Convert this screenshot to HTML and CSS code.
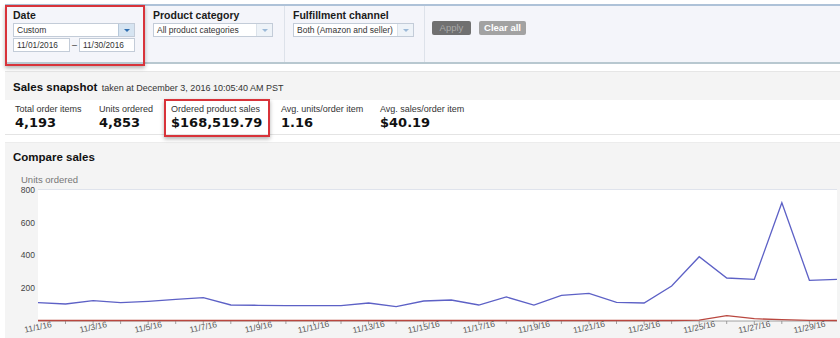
FILE: index.html
```html
<!DOCTYPE html>
<html lang="en">
<head>
	<meta charset="utf-8">
	<title>Sales dashboard</title>
	<link rel="stylesheet" href="styles.css">
</head>
<body>
	<div class="filters">
		<div class="filter">
			<div class="filter-label">Date</div>
			<div class="select select-date active">
				<span class="select-text">Custom</span>
				<span class="select-arrow"></span>
			</div>
			<div class="date-range">
				<span class="date-input">11/01/2016</span>
				<span class="date-dash">&ndash;</span>
				<span class="date-input">11/30/2016</span>
			</div>
		</div>
		<div class="filter">
			<div class="filter-label">Product category</div>
			<div class="select select-category">
				<span class="select-text">All product categories</span>
				<span class="select-arrow"></span>
			</div>
		</div>
		<div class="filter">
			<div class="filter-label">Fulfillment channel</div>
			<div class="select select-channel">
				<span class="select-text">Both (Amazon and seller)</span>
				<span class="select-arrow"></span>
			</div>
		</div>
		<div class="filter-actions">
			<button class="btn btn-apply">Apply</button>
			<button class="btn btn-clear">Clear all</button>
		</div>
		<div class="highlight highlight-date"></div>
	</div>

	<div class="snapshot">
		<div class="snapshot-head">
			<span class="section-title">Sales snapshot</span>
			<span class="snapshot-time">taken at December 3, 2016 10:05:40 AM PST</span>
		</div>
		<div class="metrics">
			<div class="metric m-items">
				<div class="metric-label">Total order items</div>
				<div class="metric-value">4,193</div>
			</div>
			<div class="metric m-units">
				<div class="metric-label">Units ordered</div>
				<div class="metric-value">4,853</div>
			</div>
			<div class="metric m-sales">
				<div class="metric-label">Ordered product sales</div>
				<div class="metric-value">$168,519.79</div>
			</div>
			<div class="metric m-avg-units">
				<div class="metric-label">Avg. units/order item</div>
				<div class="metric-value">1.16</div>
			</div>
			<div class="metric">
				<div class="metric-label">Avg. sales/order item</div>
				<div class="metric-value">$40.19</div>
			</div>
			<div class="highlight highlight-sales"></div>
		</div>
	</div>

	<div class="compare">
		<div class="compare-head section-title">Compare sales</div>
		<svg class="chart" width="835" height="168" viewBox="0 0 835 168">
			<text class="axis-title" x="16" y="13">Units ordered</text>
			<rect class="plot" x="33" y="19" width="799" height="132"></rect>
			<line class="plot-top" x1="33" y1="19.5" x2="832" y2="19.5"></line>

			<text class="y-label" x="30" y="23">800</text>
			<text class="y-label" x="30" y="56">600</text>
			<text class="y-label" x="30" y="88">400</text>
			<text class="y-label" x="30" y="121">200</text>

			<g class="ticks">
				<line x1="33" y1="151" x2="832" y2="151"></line>
				<line x1="60.5" y1="151" x2="60.5" y2="154"></line>
				<line x1="88.1" y1="151" x2="88.1" y2="154"></line>
				<line x1="115.6" y1="151" x2="115.6" y2="154"></line>
				<line x1="143.2" y1="151" x2="143.2" y2="154"></line>
				<line x1="170.7" y1="151" x2="170.7" y2="154"></line>
				<line x1="198.3" y1="151" x2="198.3" y2="154"></line>
				<line x1="225.8" y1="151" x2="225.8" y2="154"></line>
				<line x1="253.4" y1="151" x2="253.4" y2="154"></line>
				<line x1="280.9" y1="151" x2="280.9" y2="154"></line>
				<line x1="308.5" y1="151" x2="308.5" y2="154"></line>
				<line x1="336" y1="151" x2="336" y2="154"></line>
				<line x1="363.6" y1="151" x2="363.6" y2="154"></line>
				<line x1="391.1" y1="151" x2="391.1" y2="154"></line>
				<line x1="418.7" y1="151" x2="418.7" y2="154"></line>
				<line x1="446.2" y1="151" x2="446.2" y2="154"></line>
				<line x1="473.8" y1="151" x2="473.8" y2="154"></line>
				<line x1="501.3" y1="151" x2="501.3" y2="154"></line>
				<line x1="528.9" y1="151" x2="528.9" y2="154"></line>
				<line x1="556.4" y1="151" x2="556.4" y2="154"></line>
				<line x1="584" y1="151" x2="584" y2="154"></line>
				<line x1="611.5" y1="151" x2="611.5" y2="154"></line>
				<line x1="639.1" y1="151" x2="639.1" y2="154"></line>
				<line x1="666.6" y1="151" x2="666.6" y2="154"></line>
				<line x1="694.2" y1="151" x2="694.2" y2="154"></line>
				<line x1="721.7" y1="151" x2="721.7" y2="154"></line>
				<line x1="749.3" y1="151" x2="749.3" y2="154"></line>
				<line x1="776.8" y1="151" x2="776.8" y2="154"></line>
				<line x1="804.4" y1="151" x2="804.4" y2="154"></line>
			</g>

			<polyline class="line-units" points="33,132.7 60.55,134 88.1,130.7 115.65,132.7 143.2,131.3 170.75,129.3 198.3,127.7 225.85,135 253.4,135.3 280.95,135.7 308.5,135.7 336.05,135.7 363.6,133 391.15,136.7 418.7,131 446.25,130 473.8,135 501.35,127 528.9,135 556.45,125.3 584,123.3 611.55,132.3 639.1,133 666.65,116 694.2,86.7 721.75,108 749.3,109.3 776.85,32.7 804.4,110.3 831.95,109.3"></polyline>
			<polyline class="line-prev" points="33,150.5 666.65,150.5 694.2,150.2 721.75,145.7 749.3,148.7 776.85,149.7 804.4,150.3 831.95,150.5"></polyline>

			<g class="x-labels">
				<text x="33" y="160" transform="rotate(-12 33 157)">11/1/16</text>
				<text x="88.1" y="160" transform="rotate(-12 88.1 157)">11/3/16</text>
				<text x="143.2" y="160" transform="rotate(-12 143.2 157)">11/5/16</text>
				<text x="198.3" y="160" transform="rotate(-12 198.3 157)">11/7/16</text>
				<text x="253.4" y="160" transform="rotate(-12 253.4 157)">11/9/16</text>
				<text x="308.5" y="160" transform="rotate(-12 308.5 157)">11/11/16</text>
				<text x="363.6" y="160" transform="rotate(-12 363.6 157)">11/13/16</text>
				<text x="418.7" y="160" transform="rotate(-12 418.7 157)">11/15/16</text>
				<text x="473.8" y="160" transform="rotate(-12 473.8 157)">11/17/16</text>
				<text x="528.9" y="160" transform="rotate(-12 528.9 157)">11/19/16</text>
				<text x="584" y="160" transform="rotate(-12 584 157)">11/21/16</text>
				<text x="639.1" y="160" transform="rotate(-12 639.1 157)">11/23/16</text>
				<text x="694.2" y="160" transform="rotate(-12 694.2 157)">11/25/16</text>
				<text x="749.3" y="160" transform="rotate(-12 749.3 157)">11/27/16</text>
				<text x="804.4" y="160" transform="rotate(-12 804.4 157)">11/29/16</text>
			</g>
		</svg>
	</div>
</body>
</html>
```

FILE: styles.css
```css
:root {
	--filter-bg: #f4f5fa;
	--section-bg: #f4f4f4;
	--divider: #dde2ea;
	--input-border: #c3ccd8;
	--text: #222222;
	--muted: #777777;
	--red-mark: #d8333a;
}
html, body {
	margin: 0;
	padding: 0;
	overflow: hidden;
	background: #fff;
}
body {
	width: 840px;
	height: 338px;
	font-family: "Liberation Sans", Arial, sans-serif;
	color: var(--text);
}

/* filter bar */
.filters {
	position: relative;
	display: flex;
	height: 56px;
	margin: 4px 0 0 5px;
	border-top: 2px solid #aec2d8;
	border-bottom: 2px solid #b8c8d0;
	background-color: var(--filter-bg);
}
.filter {
	width: 131px;
	padding: 2px 0 0 8px;
	border-right: 1px solid var(--divider);
}
.filter-label {
	height: 15px;
	line-height: 15px;
	font-size: 10.5px;
	font-weight: bold;
	color: #1b1b1b;
}
.select {
	display: flex;
	box-sizing: border-box;
	height: 14px;
	border: 1px solid var(--input-border);
	background: #fff;
}
.select-date { width: 122px; }
.select-category { width: 120px; }
.select-channel { width: 121px; }
.select-text {
	flex: 1;
	padding-left: 3px;
	font-size: 8.5px;
	line-height: 12px;
	color: #333;
	white-space: nowrap;
}
.select-arrow {
	position: relative;
	width: 15px;
	border-left: 1px solid #dbe2ea;
	background: #eef3f8;
}
.select-arrow::after {
	content: "";
	position: absolute;
	left: 5px;
	top: 5px;
	border-left: 3px solid transparent;
	border-right: 3px solid transparent;
	border-top: 3px solid #9cbad8;
}
.select.active .select-arrow {
	background: #d6e4f1;
	border-left-color: #b7c8da;
}
.select.active .select-arrow::after {
	border-top-color: #2f6fb1;
}
.date-range {
	display: flex;
	align-items: center;
	margin-top: 1px;
}
.date-input {
	box-sizing: border-box;
	width: 57px;
	height: 14px;
	padding-left: 3px;
	border: 1px solid var(--input-border);
	background: #fff;
	font-size: 8.3px;
	line-height: 12px;
	color: #333;
}
.date-input + .date-dash + .date-input {
	width: 56px;
}
.date-dash {
	width: 9px;
	text-align: center;
	font-size: 9px;
	color: #333;
}
.filter-actions {
	display: flex;
	gap: 8px;
	align-items: flex-start;
	padding: 15px 0 0 7px;
}
.btn {
	height: 14px;
	padding: 0;
	border: 0;
	border-radius: 2px;
	font-family: "Liberation Sans", Arial, sans-serif;
	font-size: 9.5px;
	line-height: 14px;
}
.btn-apply {
	width: 39px;
	background: #707070;
	color: #a9a9a9;
}
.btn-clear {
	width: 47px;
	background: #a2a2a2;
	color: #fff;
	font-weight: bold;
}

/* red annotation boxes */
.highlight {
	position: absolute;
	box-sizing: border-box;
	border: 2px solid var(--red-mark);
	box-shadow: 0 2px 4px rgba(0, 0, 0, 0.3);
}
.highlight-date {
	left: 0;
	top: -1px;
	width: 140px;
	height: 61px;
}
.highlight-sales {
	left: 159px;
	top: -1px;
	width: 106px;
	height: 38px;
}

/* sales snapshot */
.snapshot {
	margin: 7px 0 0 5px;
}
.section-title {
	font-size: 11.5px;
	font-weight: bold;
	color: #111;
}
.snapshot-head {
	height: 28px;
	line-height: 28px;
	padding-left: 8px;
	border-top: 1px solid #e6e6e6;
	background: var(--section-bg);
}
.snapshot-time {
	font-size: 9px;
	color: #333;
}
.metrics {
	position: relative;
	display: flex;
	padding: 4px 0 3px 10px;
	border-bottom: 1px solid #e4e4e4;
}
.metric {
	width: 84px;
}
.m-units { width: 72px; }
.m-sales { width: 110px; }
.m-avg-units { width: 99px; }
.metric-label {
	height: 11px;
	line-height: 11px;
	font-size: 9px;
	color: #333;
	white-space: nowrap;
}
.metric-value {
	height: 16px;
	line-height: 16px;
	font-family: "DejaVu Sans", Verdana, sans-serif;
	font-size: 13px;
	font-weight: bold;
	color: #111;
	white-space: nowrap;
}

/* compare sales chart */
.compare {
	margin: 7px 0 0 5px;
	background: var(--section-bg);
	border-top: 1px solid #ececec;
}
.compare-head {
	height: 27px;
	line-height: 22px;
	padding: 3px 0 0 8px;
	box-sizing: border-box;
}
.chart {
	display: block;
	font-family: "Liberation Sans", Arial, sans-serif;
}
.axis-title {
	font-size: 9.5px;
	fill: var(--muted);
}
.plot {
	fill: #fff;
}
.plot-top {
	stroke: #dfe3ec;
	stroke-width: 1;
}
.y-label {
	font-size: 8.5px;
	fill: #444;
	text-anchor: end;
}
.ticks line {
	stroke: #8a8a8a;
	stroke-width: 0.8;
}
.line-units {
	fill: none;
	stroke: #5d61c6;
	stroke-width: 1.3;
}
.line-prev {
	fill: none;
	stroke: #b9473f;
	stroke-width: 1.3;
}
.x-labels text {
	font-size: 8.5px;
	fill: #555;
	text-anchor: middle;
}
```
